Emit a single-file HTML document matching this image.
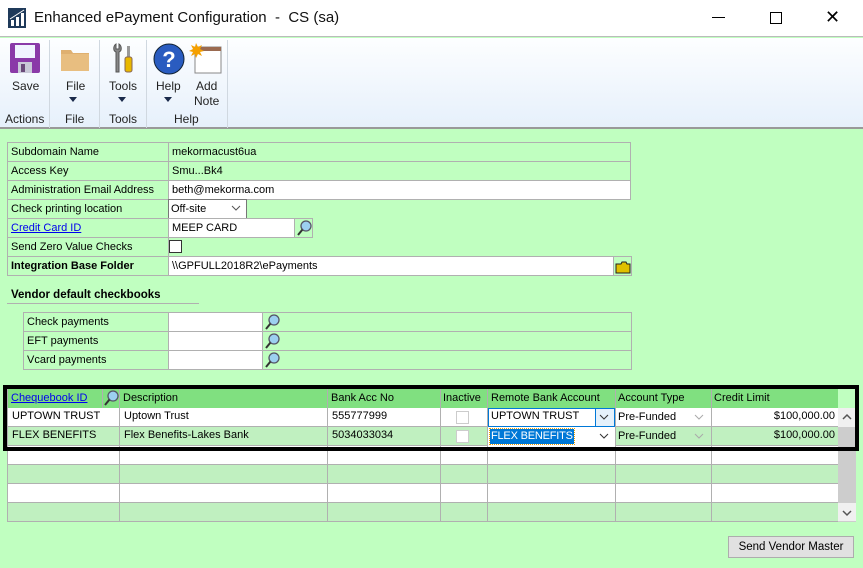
<!DOCTYPE html>
<html><head><meta charset="utf-8"><style>
*{box-sizing:border-box;margin:0;padding:0}
body{width:863px;height:568px;position:relative;overflow:hidden;background:#c0ffc0;font-family:"Liberation Sans",sans-serif;font-size:11px;color:#000}
.a{position:absolute}
.t{font-family:"Liberation Sans",sans-serif;font-size:12px;color:#222}
.c{position:absolute;border:1px solid #b0b0b0;padding:2px 3px;white-space:nowrap;overflow:hidden;height:20px;line-height:14px}
.w{background:#fff}
.g{position:absolute;white-space:nowrap}
</style></head><body>
<svg width="0" height="0" style="position:absolute"><defs>
<g id="ln"><circle cx="11" cy="7" r="5" fill="#9cd0f0" stroke="#556" stroke-width="1.3"/><line x1="7.5" y1="10.5" x2="3" y2="16" stroke="#333" stroke-width="2"/></g>
<path id="chv" d="M1 1l4 4 4-4" fill="none" stroke-width="1"/>
</defs></svg>
<div class="a" style="left:0;top:0;width:863px;height:37px;background:#fff;border-bottom:1px solid #bbb"></div>
<svg class="a" style="left:8px;top:8px" width="18" height="20"><rect width="18" height="20" fill="#1f3a5a"/><rect x="3" y="12" width="3" height="6" fill="#fff"/><rect x="8" y="9" width="3" height="9" fill="#fff"/><rect x="13" y="5" width="3" height="13" fill="#fff"/><line x1="2" y1="11" x2="16" y2="2" stroke="#fff"/></svg>
<div class="a" style="left:34px;top:9px;font-size:15px;color:#111">Enhanced ePayment Configuration &nbsp;- &nbsp;CS (sa)</div>
<div class="a" style="left:712px;top:17px;width:13px;height:1px;background:#000"></div>
<div class="a" style="left:770px;top:12px;width:12px;height:12px;border:1px solid #000"></div>
<div class="a" style="left:825px;top:7px;font-size:18px;line-height:20px">✕</div>
<div class="a" style="left:0;top:38px;width:863px;height:91px;background:linear-gradient(#fdfeff,#e6f0fb);border-bottom:2px solid #999"></div>
<div class="a" style="left:49px;top:40px;width:1px;height:88px;background:#d0d8e0"></div>
<div class="a" style="left:99px;top:40px;width:1px;height:88px;background:#d0d8e0"></div>
<div class="a" style="left:146px;top:40px;width:1px;height:88px;background:#d0d8e0"></div>
<div class="a" style="left:227px;top:40px;width:1px;height:88px;background:#d0d8e0"></div>
<svg class="a" style="left:10px;top:43px" width="30" height="30"><rect x="0" y="0" width="30" height="30" rx="2" fill="#8a3aa8"/><rect x="5" y="2" width="20" height="13" fill="#f0f4ff"/><rect x="8" y="19" width="14" height="11" fill="#c9c9d8"/><rect x="11" y="21" width="4" height="8" fill="#6a4a7a"/></svg>
<svg class="a" style="left:61px;top:47px" width="28" height="24"><path d="M0 3h10l2 3h16v18H0z" fill="#dfb070"/><rect y="7" width="28" height="17" fill="#e8be80"/></svg>
<svg class="a" style="left:112px;top:42px" width="24" height="32"><path d="M4 2c-3 2-3 7 0 8v20h3V10c3-1 3-6 0-8v5H4z" fill="#888" stroke="#555"/><rect x="15" y="4" width="3" height="12" fill="#999"/><rect x="13" y="15" width="7" height="15" rx="2" fill="#e8b800" stroke="#865"/></svg>
<svg class="a" style="left:153px;top:43px" width="32" height="32"><circle cx="16" cy="16" r="15" fill="#2a5cc0" stroke="#123"/><text x="16" y="24" font-family="Liberation Sans" font-weight="bold" font-size="22" fill="#fff" text-anchor="middle">?</text></svg>
<svg class="a" style="left:189px;top:42px" width="34" height="32"><rect x="6" y="5" width="26" height="26" fill="#fff" stroke="#888"/><rect x="6" y="5" width="26" height="4" fill="#9a6a50"/><path d="M7 1l2 4 4-2-2 4 4 2-4 1 2 4-4-2-2 4-1-4-4 2 2-4-4-1 4-2-2-4 4 2z" fill="#f5a000"/></svg>
<div class="a t" style="left:12px;top:79px">Save</div>
<div class="a t" style="left:66px;top:79px">File</div>
<div class="a t" style="left:109px;top:79px">Tools</div>
<div class="a t" style="left:156px;top:79px">Help</div>
<div class="a t" style="left:194px;top:79px;text-align:center;line-height:15px">Add<br>Note</div>
<div class="a" style="left:69px;top:97px;border:4px solid transparent;border-top:5px solid #1a2a4a"></div>
<div class="a" style="left:118px;top:97px;border:4px solid transparent;border-top:5px solid #1a2a4a"></div>
<div class="a" style="left:164px;top:97px;border:4px solid transparent;border-top:5px solid #1a2a4a"></div>
<div class="a t" style="left:5px;top:112px">Actions</div>
<div class="a t" style="left:65px;top:112px">File</div>
<div class="a t" style="left:109px;top:112px">Tools</div>
<div class="a t" style="left:174px;top:112px">Help</div>
<div class="c" style="left:7px;top:142px;width:162px">Subdomain Name</div><div class="c" style="left:168px;top:142px;width:463px">mekormacust6ua</div>
<div class="c" style="left:7px;top:161px;width:162px">Access Key</div><div class="c" style="left:168px;top:161px;width:463px">Smu...Bk4</div>
<div class="c" style="left:7px;top:180px;width:162px">Administration Email Address</div><div class="c w" style="left:168px;top:180px;width:463px">beth@mekorma.com</div>
<div class="c" style="left:7px;top:199px;width:162px">Check printing location</div><div class="c w" style="left:168px;top:199px;width:79px;border-color:#777;padding-left:2px">Off-site</div>
<svg class="a" style="left:231px;top:205px" width="11" height="8"><use href="#chv" stroke="#555"/></svg>
<div class="c" style="left:7px;top:218px;width:162px;color:#0000ee;text-decoration:underline">Credit Card ID</div><div class="c w" style="left:168px;top:218px;width:127px">MEEP CARD</div><div class="c" style="left:294px;top:218px;width:19px;padding:0"><svg width="18" height="18"><use href="#ln"/></svg></div>
<div class="c" style="left:7px;top:237px;width:162px">Send Zero Value Checks</div>
<div class="a w" style="left:169px;top:240px;width:13px;height:13px;border:1px solid #333;background:#fff"></div>
<div class="c" style="left:7px;top:256px;width:162px;font-weight:bold">Integration Base Folder</div><div class="c w" style="left:168px;top:256px;width:446px">\\GPFULL2018R2\ePayments</div><div class="c" style="left:613px;top:256px;width:19px;padding:0"><svg width="18" height="18"><path d="M2 7h5l1-2h4l1 2h3v9H2z" fill="#e0c000" stroke="#222"/></svg></div>
<div class="a" style="left:11px;top:289px;font-weight:bold;font-size:11.5px">Vendor default checkbooks</div>
<div class="a" style="left:7px;top:303px;width:192px;height:1px;background:#b0b0b0"></div>
<div class="c" style="left:23px;top:312px;width:146px">Check payments</div><div class="c w" style="left:168px;top:312px;width:95px"></div><div class="c" style="left:262px;top:312px;width:370px;padding:0"><svg width="18" height="18"><use href="#ln"/></svg></div>
<div class="c" style="left:23px;top:331px;width:146px">EFT payments</div><div class="c w" style="left:168px;top:331px;width:95px"></div><div class="c" style="left:262px;top:331px;width:370px;padding:0"><svg width="18" height="18"><use href="#ln"/></svg></div>
<div class="c" style="left:23px;top:350px;width:146px">Vcard payments</div><div class="c w" style="left:168px;top:350px;width:95px"></div><div class="c" style="left:262px;top:350px;width:370px;padding:0"><svg width="18" height="18"><use href="#ln"/></svg></div>
<div class="a" style="left:7px;top:389px;width:831px;height:19px;background:#80e080"></div>
<div class="a" style="left:7px;top:408px;width:831px;height:19px;background:#fff"></div>
<div class="a" style="left:7px;top:427px;width:831px;height:19px;background:#c0f0c0"></div>
<div class="a" style="left:7px;top:446px;width:831px;height:19px;background:#fff"></div>
<div class="a" style="left:7px;top:465px;width:831px;height:19px;background:#c0f0c0"></div>
<div class="a" style="left:7px;top:484px;width:831px;height:19px;background:#fff"></div>
<div class="a" style="left:7px;top:503px;width:831px;height:19px;background:#c0f0c0"></div>
<div class="a" style="left:7px;top:389px;width:1px;height:133px;background:#b0b0b0"></div>
<div class="a" style="left:119px;top:408px;width:1px;height:114px;background:#b0b0b0"></div>
<div class="a" style="left:327px;top:389px;width:1px;height:133px;background:#b0b0b0"></div>
<div class="a" style="left:440px;top:389px;width:1px;height:133px;background:#b0b0b0"></div>
<div class="a" style="left:487px;top:389px;width:1px;height:133px;background:#b0b0b0"></div>
<div class="a" style="left:615px;top:389px;width:1px;height:133px;background:#b0b0b0"></div>
<div class="a" style="left:711px;top:389px;width:1px;height:133px;background:#b0b0b0"></div>
<div class="a" style="left:102px;top:389px;width:1px;height:19px;background:#b0b0b0"></div>
<div class="a" style="left:119px;top:389px;width:1px;height:19px;background:#b0b0b0"></div>
<div class="a" style="left:7px;top:445px;width:831px;height:1px;background:#b0b0b0"></div>
<div class="a" style="left:7px;top:464px;width:831px;height:1px;background:#b0b0b0"></div>
<div class="a" style="left:7px;top:483px;width:831px;height:1px;background:#b0b0b0"></div>
<div class="a" style="left:7px;top:502px;width:831px;height:1px;background:#b0b0b0"></div>
<div class="a" style="left:7px;top:426px;width:831px;height:1px;background:#b0b0b0"></div>
<div class="a" style="left:7px;top:521px;width:849px;height:1px;background:#b0b0b0"></div>
<div class="a" style="left:838px;top:408px;width:18px;height:114px;background:#cdcdcd"></div>
<div class="a" style="left:838px;top:408px;width:18px;height:19px;background:#f0f0f0"></div>
<svg class="a" style="left:842px;top:413px" width="11" height="8"><path d="M1 6l4-4 4 4" fill="none" stroke="#555" stroke-width="1.5"/></svg>
<div class="a" style="left:838px;top:503px;width:18px;height:18px;background:#f0f0f0"></div>
<svg class="a" style="left:842px;top:509px" width="11" height="8"><path d="M1 2l4 4 4-4" fill="none" stroke="#555" stroke-width="1.5"/></svg>
<div class="g" style="left:11px;top:392px;color:#0000ee;text-decoration:underline">Chequebook ID</div>
<svg class="a" style="left:102px;top:389px" width="18" height="19"><use href="#ln"/></svg>
<div class="g" style="left:123px;top:392px">Description</div>
<div class="g" style="left:331px;top:392px">Bank Acc No</div>
<div class="g" style="left:443px;top:392px">Inactive</div>
<div class="g" style="left:491px;top:392px">Remote Bank Account</div>
<div class="g" style="left:618px;top:392px">Account Type</div>
<div class="g" style="left:714px;top:392px">Credit Limit</div>
<div class="g" style="left:12px;top:410px">UPTOWN TRUST</div>
<div class="g" style="left:124px;top:410px">Uptown Trust</div>
<div class="g" style="left:332px;top:410px">555777999</div>
<div class="a" style="left:456px;top:411px;width:13px;height:13px;border:1px solid #ccc;background:#fff"></div>
<div class="a" style="left:488px;top:408px;width:127px;height:19px;border:1px solid #0078d7;background:#fff;padding:1px 2px;white-space:nowrap">UPTOWN TRUST</div>
<div class="a" style="left:595px;top:409px;width:19px;height:17px;background:#e5f1fb;border-left:1px solid #0078d7"></div>
<svg class="a" style="left:599px;top:414px" width="11" height="8"><use href="#chv" stroke="#333"/></svg>
<div class="a" style="left:617px;top:409px;width:74px;height:17px;background:#fff;padding:2px 1px;white-space:nowrap">Pre-Funded</div>
<svg class="a" style="left:694px;top:414px" width="11" height="8"><use href="#chv" stroke="#aaa"/></svg>
<div class="g" style="left:714px;top:410px;width:121px;text-align:right">$100,000.00</div>
<div class="g" style="left:12px;top:429px">FLEX BENEFITS</div>
<div class="g" style="left:124px;top:429px">Flex Benefits-Lakes Bank</div>
<div class="g" style="left:332px;top:429px">5034033034</div>
<div class="a" style="left:456px;top:430px;width:13px;height:13px;border:1px solid #ccc;background:#fff"></div>
<div class="a" style="left:488px;top:427px;width:127px;height:19px;background:#fff"></div>
<div class="a" style="left:490px;top:429px;height:15px;background:#0078d7;color:#fff;padding:0 1px;outline:1px dotted #f0a000;white-space:nowrap;line-height:14px;letter-spacing:-0.2px">FLEX BENEFITS</div>
<svg class="a" style="left:599px;top:433px" width="11" height="8"><use href="#chv" stroke="#333"/></svg>
<div class="a" style="left:617px;top:428px;width:71px;height:17px;background:#c0f0c0;padding:2px 1px;white-space:nowrap">Pre-Funded</div>
<svg class="a" style="left:694px;top:433px" width="11" height="8"><use href="#chv" stroke="#aaa"/></svg>
<div class="g" style="left:714px;top:429px;width:121px;text-align:right">$100,000.00</div>
<div class="a" style="left:3px;top:385px;width:856px;height:66px;border:4px solid #000"></div>
<div class="a" style="left:728px;top:536px;width:126px;height:22px;background:#e1e1e1;border:1px solid #adadad;text-align:center;line-height:20px;font-size:11.5px">Send Vendor Master</div>
</body></html>
